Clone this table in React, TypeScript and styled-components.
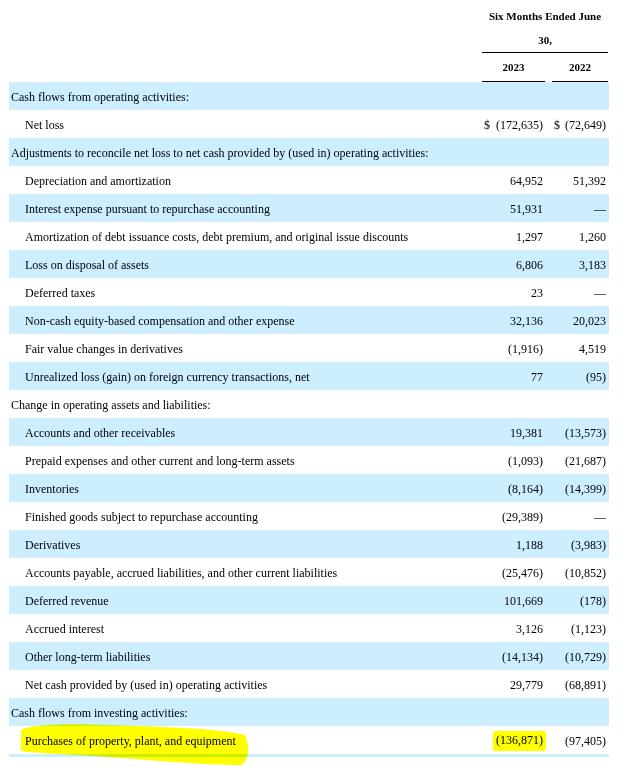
import React from "react";
import styled, { createGlobalStyle } from "styled-components";

const Global = createGlobalStyle`
  html, body { margin: 0; padding: 0; background: #fff; }
  body { font-family: "Liberation Serif", "Times New Roman", serif; color: #000; }
`;

const COLS = "473px 63px 7px 57px";
const BLUE = "#cceeff";

const Page = styled.div`
  width: 627px;
  min-height: 766px;
  box-sizing: border-box;
  padding: 4px 0 0 9px;
  background: #fff;
  isolation: isolate;
`;

const HeadRow = styled.div`
  display: grid;
  grid-template-columns: ${COLS};
`;

const PeriodHead = styled.div`
  grid-column: 2 / 5;
  width: 126px;
  text-align: center;
  font-weight: bold;
  font-size: 11px;
  line-height: 24px;
  border-bottom: 1px solid #000;
`;

const YearCell = styled.div<{ $col: number }>`
  grid-column: ${(p) => p.$col};
  height: 28px;
  line-height: 28px;
  text-align: center;
  font-weight: bold;
  font-size: 11px;
  border-bottom: 1px solid #000;
  ${(p) => (p.$col === 4 ? "margin-right: 1px;" : "")}
`;

const Row = styled.div<{ $shaded: boolean }>`
  position: relative;
  display: grid;
  grid-template-columns: ${COLS};
  align-items: center;
  box-sizing: border-box;
  height: 28px;
  padding-top: 2px;
  width: 600px;
  font-size: 12px;
  background: ${(p) => (p.$shaded ? BLUE : "#fff")};
`;

const Label = styled.div<{ $indent: boolean }>`
  padding-left: ${(p) => (p.$indent ? "16px" : "2px")};
  white-space: nowrap;
  position: relative;
  z-index: 1;
`;

const Amount = styled.div<{ $col: number; $dollar: boolean }>`
  grid-column: ${(p) => p.$col};
  display: flex;
  justify-content: ${(p) => (p.$dollar ? "space-between" : "flex-end")};
  padding: ${(p) => (p.$col === 4 ? "0 3px 0 2px" : "0 2px 0 2px")};
  white-space: nowrap;
  position: relative;
  z-index: 1;
`;

const Marked = styled.span`
  background: #ffff00;
  padding: 2px 3px 3px 3px;
  margin-right: -3px;
  border-radius: 2px;
`;

const Marker = styled.svg`
  position: absolute;
  left: 0;
  top: 0;
  overflow: visible;
  mix-blend-mode: multiply;
  pointer-events: none;
  z-index: 2;
`;

const EndStrip = styled.div`
  width: 600px;
  height: 3px;
  background: ${BLUE};
`;

type Line = {
  label: string;
  indent: boolean;
  a?: string;
  b?: string;
  dollar?: boolean;
  mark?: boolean;
};

const lines: Line[] = [
  { label: "Cash flows from operating activities:", indent: false },
  { label: "Net loss", indent: true, a: "(172,635)", b: "(72,649)", dollar: true },
  { label: "Adjustments to reconcile net loss to net cash provided by (used in) operating activities:", indent: false },
  { label: "Depreciation and amortization", indent: true, a: "64,952", b: "51,392" },
  { label: "Interest expense pursuant to repurchase accounting", indent: true, a: "51,931", b: "—" },
  { label: "Amortization of debt issuance costs, debt premium, and original issue discounts", indent: true, a: "1,297", b: "1,260" },
  { label: "Loss on disposal of assets", indent: true, a: "6,806", b: "3,183" },
  { label: "Deferred taxes", indent: true, a: "23", b: "—" },
  { label: "Non-cash equity-based compensation and other expense", indent: true, a: "32,136", b: "20,023" },
  { label: "Fair value changes in derivatives", indent: true, a: "(1,916)", b: "4,519" },
  { label: "Unrealized loss (gain) on foreign currency transactions, net", indent: true, a: "77", b: "(95)" },
  { label: "Change in operating assets and liabilities:", indent: false },
  { label: "Accounts and other receivables", indent: true, a: "19,381", b: "(13,573)" },
  { label: "Prepaid expenses and other current and long-term assets", indent: true, a: "(1,093)", b: "(21,687)" },
  { label: "Inventories", indent: true, a: "(8,164)", b: "(14,399)" },
  { label: "Finished goods subject to repurchase accounting", indent: true, a: "(29,389)", b: "—" },
  { label: "Derivatives", indent: true, a: "1,188", b: "(3,983)" },
  { label: "Accounts payable, accrued liabilities, and other current liabilities", indent: true, a: "(25,476)", b: "(10,852)" },
  { label: "Deferred revenue", indent: true, a: "101,669", b: "(178)" },
  { label: "Accrued interest", indent: true, a: "3,126", b: "(1,123)" },
  { label: "Other long-term liabilities", indent: true, a: "(14,134)", b: "(10,729)" },
  { label: "Net cash provided by (used in) operating activities", indent: true, a: "29,779", b: "(68,891)" },
  { label: "Cash flows from investing activities:", indent: false },
  { label: "Purchases of property, plant, and equipment", indent: true, a: "(136,871)", b: "(97,405)", mark: true },
];

function Cell({ col, value, dollar, mark }: { col: number; value?: string; dollar?: boolean; mark?: boolean }) {
  if (!value) return null;
  return (
    <Amount $col={col} $dollar={!!dollar}>
      {dollar && <span>$</span>}
      {mark ? <Marked>{value}</Marked> : <span>{value}</span>}
    </Amount>
  );
}

export default function App() {
  return (
    <>
      <Global />
      <Page>
        <HeadRow>
          <PeriodHead>
            Six Months Ended June
            <br />
            30,
          </PeriodHead>
        </HeadRow>
        <HeadRow>
          <YearCell $col={2}>2023</YearCell>
          <YearCell $col={4}>2022</YearCell>
        </HeadRow>
        {lines.map((l, i) => (
          <Row key={i} $shaded={i % 2 === 0}>
            <Label $indent={l.indent}>{l.label}</Label>
            <Cell col={2} value={l.a} dollar={l.dollar} mark={l.mark} />
            <Cell col={4} value={l.b} dollar={l.dollar} />
            {l.mark && (
              <Marker width="240" height="28" viewBox="0 0 240 28">
                <path
                  d="M12,4 C21,-1 51,-3 100,-1 C160,1 215,3 236,9 C241,20 240,33 233,39 C195,39 140,34 100,31 C60,28 21,27 12,25 Z"
                  fill="#ffff00"
                />
              </Marker>
            )}
          </Row>
        ))}
        <EndStrip />
      </Page>
    </>
  );
}
